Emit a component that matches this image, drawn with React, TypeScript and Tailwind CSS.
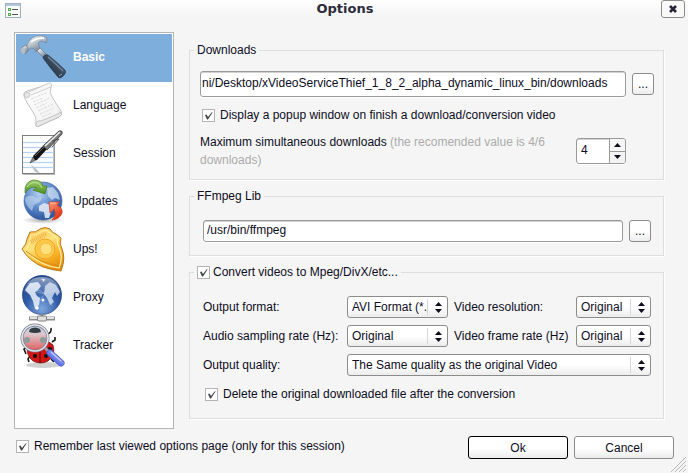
import React, { useEffect, useRef, useState } from "react";

function HammerIcon() {
  return (
    <svg viewBox="0 0 48 48" className="size-12 shrink-0" aria-hidden="true">
      <defs>
        <linearGradient id="steel" x1="0" y1="0" x2="0.6" y2="1">
          <stop offset="0" stopColor="#ffffff" />
          <stop offset="0.45" stopColor="#c3ccd4" />
          <stop offset="1" stopColor="#6f7d8a" />
        </linearGradient>
        <linearGradient id="grip" x1="1" y1="0" x2="0" y2="1">
          <stop offset="0" stopColor="#6e8095" />
          <stop offset="0.5" stopColor="#35465a" />
          <stop offset="1" stopColor="#1d2a3a" />
        </linearGradient>
      </defs>
      <path d="M19 17 L22 14 L29 21 L26 24 Z" fill="url(#steel)" stroke="#66737f" strokeWidth="0.6" />
      <path d="M25 24 Q26 20 30 21 Q40 29 47 36 Q49 39 44 43 Q42 45 40 43 Q33 35 25 24 Z" fill="url(#grip)" stroke="#223042" strokeWidth="0.6" />
      <path d="M30 23 Q38 30 45 37" stroke="#8fa0b3" strokeWidth="1.2" fill="none" opacity="0.7" />
      <path d="M41 42 l3 -2" stroke="#9aaabc" strokeWidth="1" />
      <path d="M9 11 Q12 4 18 2 Q25 1 28 3 Q30 6 28 9 Q23 5 20 9 L22 14 L18 18 Q16 13 13 14 L9 17 Z" fill="url(#steel)" stroke="#768491" strokeWidth="0.7" />
      <path d="M13 8 Q18 4 26 4" stroke="#fff" strokeWidth="1.4" fill="none" />
      <path d="M3 14 L8 11 Q11 13 10 17 L7 20 Q3 19 3 14 Z" fill="url(#steel)" stroke="#6d7a87" strokeWidth="0.7" />
      <ellipse cx="5" cy="17" rx="2" ry="3" transform="rotate(-28 5 17)" fill="#b4bec7" />
    </svg>
  );
}

function ScrollIcon() {
  return (
    <svg viewBox="0 0 48 48" className="size-12 shrink-0" aria-hidden="true">
      <defs>
        <linearGradient id="parchment" x1="0" y1="0" x2="1" y2="1">
          <stop offset="0" stopColor="#dcdcdc" />
          <stop offset="0.25" stopColor="#fbfbfb" />
          <stop offset="0.75" stopColor="#f4f4f4" />
          <stop offset="1" stopColor="#cfcfcf" />
        </linearGradient>
      </defs>
      <path d="M6 14 Q5 10 9 9 L31 2 Q34 1 33 5 Q31 11 34 15 L43 29 Q45 33 41 35 L21 44 Q17 45 18 41 Q19 36 15 30 Q8 20 6 14 Z" fill="url(#parchment)" stroke="#b5b5b5" strokeWidth="0.8" />
      <path d="M6 13 Q8 9 11 11 Q13 13 11 15 Q8 17 6 13" fill="#e8e8e8" stroke="#b0b0b0" strokeWidth="0.6" />
      <path d="M11 10 L31 1 Q35 1 33 5 L13 13" fill="#f6f6f6" stroke="#b5b5b5" strokeWidth="0.6" />
      <path d="M18 42 Q19 38 23 39 L40 32 Q43 30 43 30 Q45 33 41 35 L21 44 Q17 46 18 42" fill="#e9e9e9" stroke="#a5a5a5" strokeWidth="0.6" />
      <g stroke="#d0d0d0" strokeWidth="0.8" strokeDasharray="3 1 2 1">
        <path d="M13 17 L28 11" /><path d="M15 20 L25 16" /><path d="M16 23 L32 16" />
        <path d="M18 26 L29 21" /><path d="M20 29 L35 22" /><path d="M22 32 L36 26" /><path d="M24 35 L33 31" />
      </g>
    </svg>
  );
}

function NoteIcon() {
  return (
    <svg viewBox="0 0 48 48" className="size-12 shrink-0" aria-hidden="true">
      <rect x="5" y="6" width="32" height="39" fill="#b9b9b9" />
      <rect x="4.500" y="5.500" width="31.500" height="38" fill="#fdfdfd" stroke="#7d7d7d" />
      <g stroke="#b5d3ef" strokeWidth="1.2">
        <path d="M5 12.500H36" /><path d="M5 17.500H36" /><path d="M5 22.500H36" />
        <path d="M5 27.500H36" /><path d="M5 32.500H36" /><path d="M5 37.500H36" />
      </g>
      <path d="M13 35 Q16 36 22 43 L17 42 Z" fill="#bfc4c9" />
      <path d="M12 33 L15 27 L18 30 Z" fill="#8e8e8e" stroke="#333" strokeWidth="0.6" />
      <path d="M15 26 L25 16 L29 19 L19 30 Q16 31 15 26 Z" fill="#141414" />
      <path d="M25 16 L41 1 Q45 0 44 4 L29 20 Z" fill="#777" stroke="#333" strokeWidth="0.8" />
      <path d="M27 16 L42 2" stroke="#f1f1f1" strokeWidth="1.5" />
      <path d="M34 11 L41 9 L34 17" fill="none" stroke="#4a4a4a" strokeWidth="0.9" />
      <path d="M17 26 L26 17" stroke="#777" strokeWidth="0.8" />
    </svg>
  );
}

function UpdatesIcon() {
  return (
    <svg viewBox="0 0 48 48" className="size-12 shrink-0" aria-hidden="true">
      <defs>
        <radialGradient id="seaBlue" cx="0.4" cy="0.3" r="0.75">
          <stop offset="0" stopColor="#b5d0f1" />
          <stop offset="0.5" stopColor="#5e8bcb" />
          <stop offset="1" stopColor="#274e94" />
        </radialGradient>
        <linearGradient id="leaf" x1="0" y1="0" x2="0" y2="1">
          <stop offset="0" stopColor="#a0cf70" />
          <stop offset="1" stopColor="#4c8f1e" />
        </linearGradient>
        <linearGradient id="ember" x1="0" y1="0" x2="0.6" y2="1">
          <stop offset="0" stopColor="#ff9a7c" />
          <stop offset="1" stopColor="#dc3213" />
        </linearGradient>
        <radialGradient id="floorShade">
          <stop offset="0" stopColor="#777" stopOpacity="0.6" />
          <stop offset="1" stopColor="#777" stopOpacity="0" />
        </radialGradient>
      </defs>
      <ellipse cx="25" cy="42" rx="21" ry="4" fill="url(#floorShade)" />
      <circle cx="25" cy="23" r="19" fill="url(#seaBlue)" stroke="#3c62a3" strokeWidth="0.6" />
      <path d="M8 19 Q14 16 18 20 L24 19 L22 24 L16 27 L14 33 Q8 28 7 22 Z" fill="#cbdcf2" opacity="0.55" />
      <path d="M21 28 L26 25 L33 27 L36 31 L33 34 L31 40 L27 40 L26 34 L21 33 Z" fill="#e7effa" opacity="0.85" />
      <path d="M29 10 L35 9 L40 15 L42 22 L37 20 L34 22 L30 18 Z" fill="#d4e2f5" opacity="0.7" />
      <path d="M7 15 Q6 4 15 2 Q24 2 25 8 L29 8 L27 16 L15 12 L19 10 Q12 7 7 15 Z" fill="url(#leaf)" stroke="#427d1c" strokeWidth="0.7" />
      <path d="M9 9 Q13 3 20 5 Q23 7 24 10" fill="none" stroke="#c8e8a6" strokeWidth="0.9" />
      <path d="M31 24 L42 24 L39 27 Q45 30 44 35 Q42 41 34 42 Q39 37 36 31 L32 35 Z" fill="url(#ember)" stroke="#c73719" strokeWidth="0.7" />
      <path d="M32 25 L38 25" stroke="#ffd1c2" strokeWidth="0.8" />
    </svg>
  );
}

function BadgeIcon() {
  return (
    <svg viewBox="0 0 48 48" className="size-12 shrink-0" aria-hidden="true">
      <defs>
        <linearGradient id="gold" x1="0.2" y1="0" x2="0.7" y2="1">
          <stop offset="0" stopColor="#ffc24e" />
          <stop offset="0.4" stopColor="#ffe27c" />
          <stop offset="0.7" stopColor="#fbb52c" />
          <stop offset="1" stopColor="#e58c0c" />
        </linearGradient>
      </defs>
      <path d="M12 6 Q18 7 22 3 Q27 0 32 3 Q34 7 38 8 L43 12 Q41 18 44 23 Q48 32 43 45 Q34 44 25 41 Q11 35 4 23 Q9 18 9 13 Z" fill="url(#gold)" stroke="#b87613" strokeWidth="1" />
      <path d="M13 9 Q19 9 24 5 Q29 4 31 6 L39 12 Q39 18 42 24 Q45 33 41 42 Q19 39 8 24 Q12 18 12 13 Z" fill="none" stroke="#fff0a4" strokeWidth="1.2" />
      <path d="M13 16 L28 8" stroke="#d49024" strokeWidth="4" strokeDasharray="1 1" opacity="0.5" />
      <circle cx="27" cy="23" r="10" fill="#ffc945" stroke="#eda52a" strokeWidth="1" />
      <circle cx="28" cy="23" r="6" fill="#ffe07c" stroke="#f5b940" strokeWidth="1" />
      <path d="M8 25 Q22 37 41 40" fill="none" stroke="#d98b12" strokeWidth="1" />
    </svg>
  );
}

function ProxyIcon() {
  return (
    <svg viewBox="0 0 48 48" className="size-12 shrink-0" aria-hidden="true">
      <defs>
        <radialGradient id="deepBlue" cx="0.5" cy="0.85" r="0.95">
          <stop offset="0" stopColor="#7ea6df" />
          <stop offset="0.45" stopColor="#315da6" />
          <stop offset="1" stopColor="#1a3a7c" />
        </radialGradient>
        <linearGradient id="gloss" x1="0" y1="0" x2="0" y2="1">
          <stop offset="0" stopColor="#ffffff" stopOpacity="0.5" />
          <stop offset="1" stopColor="#ffffff" stopOpacity="0.05" />
        </linearGradient>
      </defs>
      <circle cx="24" cy="21" r="19.500" fill="url(#deepBlue)" stroke="#27478a" strokeWidth="0.8" />
      <path d="M7 16 L12 9 L20 8 L23 12 L20 16 L17 18 L19 22 L22 24 L21 31 L17 35 L15 27 L12 21 Z" fill="#e9f1fb" opacity="0.85" />
      <path d="M27 12 L32 8 L38 11 L42 18 L39 22 L37 18 L34 24 L36 28 L32 31 L29 24 L26 20 Z" fill="#dce8f8" opacity="0.75" />
      <path d="M23 5 L27 5 L26 8 Z" fill="#fff" opacity="0.8" />
      <g fill="none" stroke="#c9dcf5" strokeWidth="0.5" opacity="0.8">
        <path d="M10 12 Q23 25 39 15" /><path d="M19 34 Q23 20 36 12" /><path d="M14 14 Q32 18 34 32" />
      </g>
      <path d="M6 18 Q9 3 24 3 Q39 3 42 18 Q24 23 6 18 Z" fill="url(#gloss)" />
      <circle cx="19" cy="34" r="1.8" fill="#fff" /><circle cx="25" cy="26" r="1.5" fill="#fff" />
      <path d="M24 40 V43" stroke="#8a8a8a" strokeWidth="3" />
      <path d="M11 44.500 H37" stroke="#8d8d8d" strokeWidth="4" />
      <path d="M12 44 H36" stroke="#e2e2e2" strokeWidth="2" />
      <rect x="19.500" y="42" width="9" height="5" rx="1" fill="#dedede" stroke="#777" strokeWidth="0.9" />
    </svg>
  );
}

function TrackerIcon() {
  return (
    <svg viewBox="0 0 48 48" className="size-12 shrink-0" aria-hidden="true">
      <defs>
        <linearGradient id="lens" x1="0" y1="0" x2="0" y2="1">
          <stop offset="0" stopColor="#b6d4ea" />
          <stop offset="0.35" stopColor="#dcc6cc" />
          <stop offset="1" stopColor="#df5b5b" />
        </linearGradient>
        <linearGradient id="handle" x1="1" y1="0" x2="0" y2="1">
          <stop offset="0" stopColor="#a8b5ff" />
          <stop offset="1" stopColor="#3b50d8" />
        </linearGradient>
      </defs>
      <ellipse cx="25" cy="43" rx="17" ry="3" fill="#999" opacity="0.45" />
      <g fill="none" stroke="#181818" strokeWidth="1.6">
        <path d="M29 12 Q34 11 33 6" /><path d="M34 20 L37 18 V15" /><path d="M9 25 L6 27 L8 32" />
        <path d="M12 34 L10 37 L11 40" /><path d="M33 37 L36 40" />
      </g>
      <path d="M9 22 Q22 11 35 23 Q38 33 30 39 Q23 43 15 39 Q8 34 9 22 Z" fill="#d41516" stroke="#660b0b" strokeWidth="0.7" />
      <path d="M22 24 V41" stroke="#3b0606" strokeWidth="0.9" />
      <circle cx="17" cy="34" r="2" fill="#111" /><circle cx="28" cy="34" r="2" fill="#111" /><circle cx="32" cy="27" r="2" fill="#111" />
      <circle cx="17" cy="16" r="13" fill="url(#lens)" stroke="#777985" strokeWidth="3" />
      <path d="M12 7 Q17 4 22 7 L23 10 Q17 12 11 10 Z" fill="#333c43" />
      <ellipse cx="9" cy="18" rx="3" ry="3" fill="#8c9c9c" /><ellipse cx="25" cy="18" rx="3" ry="3" fill="#8c9c9c" />
      <circle cx="17" cy="16" r="13" fill="none" stroke="#e2e4f0" strokeWidth="1.6" />
      <path d="M27 26 L31 30" stroke="#9a9cad" strokeWidth="3" />
      <path d="M32 31 L43 41" stroke="#4656c0" strokeWidth="7" strokeLinecap="round" />
      <path d="M32 31 L43 41" stroke="url(#handle)" strokeWidth="5.500" strokeLinecap="round" />
      <path d="M33 30 L43 39" stroke="#c5ccff" strokeWidth="1.2" />
    </svg>
  );
}

const pages = [
  { name: "Basic", Icon: HammerIcon },
  { name: "Language", Icon: ScrollIcon },
  { name: "Session", Icon: NoteIcon },
  { name: "Updates", Icon: UpdatesIcon },
  { name: "Ups!", Icon: BadgeIcon },
  { name: "Proxy", Icon: ProxyIcon },
  { name: "Tracker", Icon: TrackerIcon },
];

function Tick({ id }: { id: string }) {
  const [on, setOn] = useState(true);
  return (
    <span className="grid shrink-0">
      <input
        id={id}
        type="checkbox"
        checked={on}
        onChange={() => setOn(!on)}
        className="col-start-1 row-start-1 size-[13px] appearance-none border border-[#b4b4b4] bg-white"
      />
      {on && (
        <svg viewBox="0 0 13 13" className="pointer-events-none col-start-1 row-start-1 size-[13px]" aria-hidden="true">
          <path d="M3 6 L4.500 5.500 L6 8 L10 3 L10.500 3.500 L6 10.500 L5 10.500 Z" fill="#3e4347" />
        </svg>
      )}
    </span>
  );
}

const fieldFace = "rounded-[3px] border border-[#9a9a9a] bg-white shadow-[inset_0_1px_0_#d0d0d0,0_1px_0_#fff]";
const raised = "border border-[#8c8c8c] bg-linear-to-b from-white from-50% to-[#ececec]";

function Browse({ label }: { label: string }) {
  return (
    <button type="button" aria-label={label} className={`h-[22px] w-[22px] shrink-0 rounded-[3px] text-center leading-[18px] ${raised}`}>
      ...
    </button>
  );
}

function Choice({ id, value, className }: { id: string; value: string; className?: string }) {
  return (
    <div className={`relative ${className ?? ""}`}>
      <select id={id} className={`block h-[22px] w-full appearance-none rounded-[3px] pr-5 pb-px pl-1 ${raised}`}>
        <option>{value}</option>
      </select>
      <svg viewBox="0 0 22 22" className="pointer-events-none absolute top-0 right-0 size-[22px]" aria-hidden="true">
        <path d="M1.500 3V19" stroke="#d6d6d6" />
        <path d="M12.500 6 L16 10 H9 Z M12.500 17 L16 13 H9 Z" fill="#0c0c1c" />
      </svg>
    </div>
  );
}

function Group({ legend, className, children }: { legend: React.ReactNode; className: string; children: React.ReactNode }) {
  return (
    <fieldset className="min-w-0 border border-[#dedede] shadow-[1px_1px_0_#fff]">
      <legend className="ml-1 flex h-[18px] items-center gap-[3px] bg-[#f5f5f5] px-[3px]">{legend}</legend>
      <div className={className}>{children}</div>
    </fieldset>
  );
}

export default function App() {
  const [page, setPage] = useState("Basic");
  const [count, setCount] = useState(4);
  const pathRef = useRef<HTMLInputElement>(null);
  useEffect(() => {
    if (pathRef.current) pathRef.current.scrollLeft = pathRef.current.scrollWidth;
  }, []);

  return (
    <div className="flex min-h-screen flex-col bg-[#f5f5f5] font-['Liberation_Sans',Arial,sans-serif] text-[12px] leading-[18px] text-[#0d0d1d]">
      <header className="grid h-8 grid-cols-[1fr_auto_1fr] items-start bg-linear-to-b from-white to-[#f5f5f5] to-50% pr-[3px] pl-[5px]">
        <svg viewBox="0 0 16 16" className="mt-[3px] size-4" aria-hidden="true">
          <rect x="0.500" y="0.500" width="15" height="14" fill="#f7f9f7" stroke="#9fafbd" />
          <path d="M1 2H15" stroke="#b3c7dc" strokeWidth="2" />
          <path d="M3 5h3v3H3zM3 10h3v3H3z" fill="#59a953" />
          <path d="M4 6h1v1H4zM4 11h1v1H4z" fill="#d6f0ce" />
          <path d="M7 6.500H13M7 11.500H13" stroke="#555" />
        </svg>
        <h1 className="font-['DejaVu_Sans',sans-serif] text-[13px] font-bold text-[#2b2b3a]">Options</h1>
        <button type="button" aria-label="Close" className="flex h-[18px] w-6 items-center justify-center justify-self-end rounded-[3px] border border-[#8c8c8c] bg-[#f9f9f9]">
          <svg viewBox="0 0 10 10" className="size-[10px]" aria-hidden="true">
            <path d="M2 2L8 8M8 2L2 8" stroke="#252536" strokeWidth="2.600" />
          </svg>
        </button>
      </header>

      <main className="flex gap-[15px] pr-6 pl-[14px]">
        <nav className="w-40 shrink-0 border border-[#b4b4b4] bg-white p-px">
          {pages.map(({ name, Icon }) => (
            <button
              key={name}
              type="button"
              onClick={() => setPage(name)}
              className={`flex h-12 w-full items-center gap-[7px] pl-[2px] text-left ${page === name ? "bg-[#7eaedc] font-bold text-white" : ""}`}
            >
              <Icon />
              <span className="pb-[2px]">{name}</span>
            </button>
          ))}
        </nav>

        <div className="flex min-w-0 flex-1 flex-col gap-[7px] pt-[9px] pb-[10px]">
          <Group legend="Downloads" className="pt-3 pr-[9px] pb-[10px] pl-[10px]">
            <div className="flex items-center gap-[6px]">
              <input ref={pathRef} aria-label="Download folder" defaultValue="ni/Desktop/xVideoServiceThief_1_8_2_alpha_dynamic_linux_bin/downloads" className={`h-[26px] min-w-0 flex-1 pr-1 pb-[2px] pl-px ${fieldFace}`} />
              <Browse label="Browse download folder" />
            </div>
            <div className="mt-[9px] flex items-center gap-[5px] pl-[2px]">
              <Tick id="popup" />
              <label htmlFor="popup">Display a popup window on finish a download/conversion video</label>
            </div>
            <div className="mt-[9px] flex items-center justify-between pr-7">
              <label htmlFor="max" className="w-[370px]">
                Maximum simultaneous downloads <span className="text-[#ababab]">(the recomended value is 4/6 downloads)</span>
              </label>
              <div className={`flex h-[26px] w-[50px] overflow-hidden ${fieldFace}`}>
                <input id="max" inputMode="numeric" value={count} onChange={(e) => setCount(Number(e.target.value) || 0)} className="w-0 flex-1 bg-transparent pb-[2px] pl-1" />
                <div className="flex w-4 flex-col border-l border-[#9a9a9a]">
                  <button type="button" aria-label="Increase" onClick={() => setCount(count + 1)} className="flex flex-1 items-center justify-center border-b border-[#9a9a9a] bg-[#f7f7f7]">
                    <svg viewBox="0 0 7 4" className="h-1 w-[7px]" aria-hidden="true"><path d="M0 4L3.500 0L7 4Z" fill="#0c0c1c" /></svg>
                  </button>
                  <button type="button" aria-label="Decrease" onClick={() => setCount(count - 1)} className="flex flex-1 items-center justify-center bg-[#f3f3f3]">
                    <svg viewBox="0 0 7 4" className="h-1 w-[7px]" aria-hidden="true"><path d="M0 0L3.500 4L7 0Z" fill="#0c0c1c" /></svg>
                  </button>
                </div>
              </div>
            </div>
          </Group>

          <Group legend="FFmpeg Lib" className="flex items-center gap-[6px] pt-[15px] pr-3 pb-[13px] pl-[13px]">
            <input aria-label="FFmpeg Lib path" defaultValue="/usr/bin/ffmpeg" className={`h-[22px] min-w-0 flex-1 pb-[2px] pl-[3px] ${fieldFace}`} />
            <Browse label="Browse FFmpeg library" />
          </Group>

          <Group
            legend={<><Tick id="convert" /><label htmlFor="convert">Convert videos to Mpeg/DivX/etc...</label></>}
            className="pt-[15px] pr-3 pb-[15px] pl-[13px]"
          >
            <div className="grid grid-cols-[138px_101px_1fr_75px] items-center gap-x-[6px] gap-y-[7px]">
              <label htmlFor="format">Output format:</label>
              <Choice id="format" value="AVI Format (*.avi)" />
              <label htmlFor="resolution">Video resolution:</label>
              <Choice id="resolution" value="Original" />
              <label htmlFor="sampling" className="whitespace-nowrap">Audio sampling rate (Hz):</label>
              <Choice id="sampling" value="Original" />
              <label htmlFor="frames" className="whitespace-nowrap">Video frame rate (Hz)</label>
              <Choice id="frames" value="Original" />
              <label htmlFor="quality">Output quality:</label>
              <Choice id="quality" value="The Same quality as the original Video" className="col-span-3" />
            </div>
            <div className="mt-[9px] flex items-center gap-[5px] pl-[2px]">
              <Tick id="delete" />
              <label htmlFor="delete">Delete the original downloaded file after the conversion</label>
            </div>
          </Group>
        </div>
      </main>

      <footer className="relative flex flex-1 items-start justify-between pt-[7px] pr-[14px] pb-[13px] pl-4">
        <div className="flex items-center gap-[5px] pt-px">
          <Tick id="remember" />
          <label htmlFor="remember">Remember last viewed options page (only for this session)</label>
        </div>
        <div className="flex gap-[6px]">
          <button type="button" className="h-[23px] w-[100px] rounded-[3px] border border-black bg-linear-to-b from-white from-50% to-[#ececec] leading-[20px]">Ok</button>
          <button type="button" className={`h-[23px] w-[100px] rounded-[3px] leading-[20px] ${raised}`}>Cancel</button>
        </div>
        <svg viewBox="0 0 18 18" className="absolute right-0 bottom-0 size-[18px]" aria-hidden="true">
          <path d="M1 17L16 2M5 17L16 6M9 17L16 10M13 17L16 14" stroke="#b5b5b5" />
        </svg>
      </footer>
    </div>
  );
}
